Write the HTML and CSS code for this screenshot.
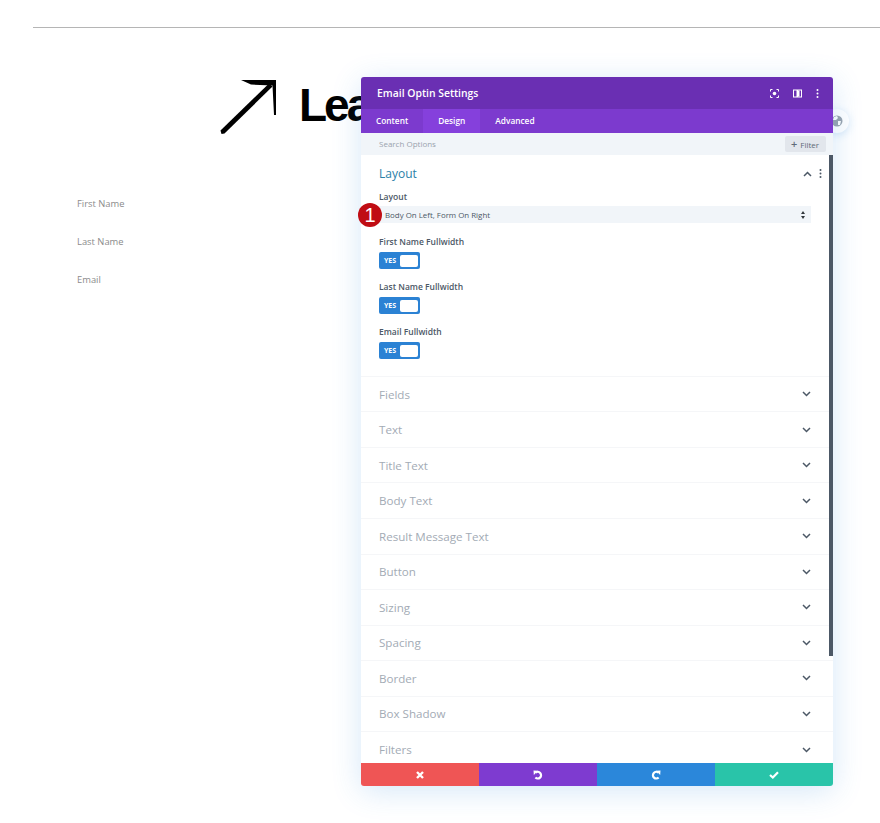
FILE: index.html
```html
<!DOCTYPE html>
<html lang="en">
<head>
<meta charset="utf-8">
<title>Email Optin Settings</title>
<link rel="stylesheet" href="styles.css">
</head>
<body>
<main class="page">
  <hr class="rule">
  <div class="title">
    <svg class="arrow" width="58" height="58" viewBox="0 0 58 58"><path d="M0.500 52.500 L49 5.500 L52.500 8.500 L4.500 55.500 L1.500 56 Z" fill="#000"/><path d="M21 2 H56 V37 H54 L52.500 7.500 L31 6.500 Z" fill="#000"/></svg>
    <span class="title-text">Lead</span>
  </div>
  <div class="fields">
    <div class="field">First Name</div>
    <div class="field">Last Name</div>
    <div class="field">Email</div>
  </div>
</main>

<div class="globe">
  <svg width="12" height="12" viewBox="0 0 12 12"><circle cx="6" cy="6" r="5.500" fill="#9aa3ad"/><path d="M3 2 L6 1 L7 3 L5 5 L2 5 Z M7 6 L10 6 L9 10 L7 10 Z" fill="#fff"/></svg>
</div>

<section class="panel">
  <header class="panel-head">
    <h1 class="panel-title">Email Optin Settings</h1>
    <div class="head-icons">
      <svg width="9" height="9" viewBox="0 0 9 9"><circle cx="4.500" cy="4.500" r="1.800" fill="#fff"/><path d="M.5 2.500V.5H2.500M6.500.5H8.500V2.500M8.500 6.500V8.500H6.500M2.500 8.500H.5V6.500" fill="none" stroke="#fff"/></svg>
      <svg width="9" height="9" viewBox="0 0 9 9"><path d="M0 .5H9V8.500H0Z M1 1.500V7.500H3.500V1.500Z M5 1.500V7.500H8V1.500Z" fill="#fff" fill-rule="evenodd"/><rect x="5" y="1.500" width="1.500" height="6" fill="#fff"/></svg>
      <svg width="3" height="9" viewBox="0 0 3 9"><circle cx="1.500" cy="1" r="1" fill="#fff"/><circle cx="1.500" cy="4.500" r="1" fill="#fff"/><circle cx="1.500" cy="8" r="1" fill="#fff"/></svg>
    </div>
  </header>
  <nav class="tabs">
    <span class="tab">Content</span>
    <span class="tab tab-active">Design</span>
    <span class="tab">Advanced</span>
  </nav>
  <div class="search">
    <span class="search-text">Search Options</span>
    <span class="filter"><b class="plus">+</b><span>Filter</span></span>
  </div>
  <div class="body">
    <div class="scrollbar"></div>
    <div class="open-group">
      <div class="open-head">
        <h2 class="open-title">Layout</h2>
        <div class="open-icons">
          <svg width="9" height="6" viewBox="0 0 9 6"><path d="M1 5 L4.500 1.500 L8 5" fill="none" stroke="#4c5866" stroke-width="1.500"/></svg>
          <svg width="3" height="9" viewBox="0 0 3 9"><circle cx="1.500" cy="1" r="1" fill="#4c5866"/><circle cx="1.500" cy="4.500" r="1" fill="#4c5866"/><circle cx="1.500" cy="8" r="1" fill="#4c5866"/></svg>
        </div>
      </div>
      <div class="label label-first">Layout</div>
      <div class="select">
        <span>Body On Left, Form On Right</span>
        <svg width="4" height="8" viewBox="0 0 4 8"><path d="M2 0 L4 3 H0Z M2 8 L4 5 H0Z" fill="#32373c"/></svg>
      </div>
      <div class="label label-after-select">First Name Fullwidth</div>
      <div class="toggle"><span class="yes">YES</span><span class="knob"></span></div>
      <div class="label">Last Name Fullwidth</div>
      <div class="toggle"><span class="yes">YES</span><span class="knob"></span></div>
      <div class="label">Email Fullwidth</div>
      <div class="toggle"><span class="yes">YES</span><span class="knob"></span></div>
    </div>
    <div class="row"><span>Fields</span><svg class="chev" width="9" height="6" viewBox="0 0 9 6"><path d="M1 1 L4.500 4.500 L8 1" /></svg></div>
    <div class="row"><span>Text</span><svg class="chev" width="9" height="6" viewBox="0 0 9 6"><path d="M1 1 L4.500 4.500 L8 1" /></svg></div>
    <div class="row"><span>Title Text</span><svg class="chev" width="9" height="6" viewBox="0 0 9 6"><path d="M1 1 L4.500 4.500 L8 1" /></svg></div>
    <div class="row"><span>Body Text</span><svg class="chev" width="9" height="6" viewBox="0 0 9 6"><path d="M1 1 L4.500 4.500 L8 1" /></svg></div>
    <div class="row"><span>Result Message Text</span><svg class="chev" width="9" height="6" viewBox="0 0 9 6"><path d="M1 1 L4.500 4.500 L8 1" /></svg></div>
    <div class="row"><span>Button</span><svg class="chev" width="9" height="6" viewBox="0 0 9 6"><path d="M1 1 L4.500 4.500 L8 1" /></svg></div>
    <div class="row"><span>Sizing</span><svg class="chev" width="9" height="6" viewBox="0 0 9 6"><path d="M1 1 L4.500 4.500 L8 1" /></svg></div>
    <div class="row"><span>Spacing</span><svg class="chev" width="9" height="6" viewBox="0 0 9 6"><path d="M1 1 L4.500 4.500 L8 1" /></svg></div>
    <div class="row"><span>Border</span><svg class="chev" width="9" height="6" viewBox="0 0 9 6"><path d="M1 1 L4.500 4.500 L8 1" /></svg></div>
    <div class="row"><span>Box Shadow</span><svg class="chev" width="9" height="6" viewBox="0 0 9 6"><path d="M1 1 L4.500 4.500 L8 1" /></svg></div>
    <div class="row"><span>Filters</span><svg class="chev" width="9" height="6" viewBox="0 0 9 6"><path d="M1 1 L4.500 4.500 L8 1" /></svg></div>
  </div>
  <footer class="actions">
    <span class="action a-red"><svg width="8" height="8" viewBox="0 0 8 8"><path d="M1 1 L7 7 M7 1 L1 7" stroke="#fff" stroke-width="2.400" fill="none"/></svg></span>
    <span class="action a-purple"><svg width="10" height="10" viewBox="0 0 10 10"><path d="M2.600 2.700 A3.300 3.300 0 1 1 2.400 7.500" fill="none" stroke="#fff" stroke-width="2.200"/><path d="M.5 .6 L5 .8 L.8 5 Z" fill="#fff"/></svg></span>
    <span class="action a-blue"><svg width="10" height="10" viewBox="0 0 10 10"><path d="M7.400 2.700 A3.300 3.300 0 1 0 7.600 7.500" fill="none" stroke="#fff" stroke-width="2.200"/><path d="M9.500 .6 L5 .8 L9.200 5 Z" fill="#fff"/></svg></span>
    <span class="action a-green"><svg width="10" height="8" viewBox="0 0 10 8"><path d="M1 4 L3.800 6.500 L9 1.200" fill="none" stroke="#fff" stroke-width="2.200"/></svg></span>
  </footer>
</section>

<div class="badge">1</div>
</body>
</html>
```

FILE: styles.css
```css
* { box-sizing: border-box; }
html, body { margin: 0; padding: 0; }
body {
  width: 880px;
  height: 823px;
  overflow: hidden;
  background: #fff;
  font-family: "Open Sans", sans-serif;
  position: relative;
}
.page { padding: 27px 0 0 33px; }
.rule { margin: 0; border: 0; height: 1px; background: #b5b5b5; }
.title {
  display: flex;
  align-items: flex-start;
  gap: 21px;
  margin: 50px 0 0 187px;
}
.arrow { flex: none; }
.title-text {
  font-family: "Liberation Sans", sans-serif;
  font-weight: 700;
  font-size: 46px;
  line-height: 54px;
  letter-spacing: -3px;
  color: #000;
}
.fields {
  margin: 61px 0 0 44px;
  display: flex;
  flex-direction: column;
  gap: 24px;
}
.field { font-size: 9.400px; line-height: 14px; color: #8b8b8b; }

.panel {
  position: absolute;
  left: 361px;
  top: 77px;
  width: 472px;
  height: 709px;
  display: flex;
  flex-direction: column;
  border-radius: 3px;
  overflow: hidden;
  background: #fff;
  box-shadow: 0 5px 30px rgba(43, 135, 218, .2);
}
.globe {
  position: absolute;
  left: 825px;
  top: 109px;
  width: 24px;
  height: 24px;
  border-radius: 50%;
  background: #fff;
  box-shadow: 0 2px 8px rgba(43, 135, 218, .2);
  display: flex;
  align-items: center;
  justify-content: flex-end;
  padding-right: 6px;
}
.panel-head {
  flex: none;
  height: 32px;
  background: #6a2fb3;
  display: flex;
  align-items: center;
  justify-content: space-between;
  padding: 0 14px 0 16px;
}
.panel-title { margin: 0; font-size: 10.400px; font-weight: 600; color: #fff; }
.head-icons { display: flex; align-items: center; gap: 14px; }
.tabs {
  flex: none;
  height: 24px;
  background: #7c3ace;
  display: flex;
}
.tab {
  display: flex;
  align-items: center;
  padding: 0 15px 2px;
  font-size: 8.300px;
  font-weight: 600;
  color: #fff;
}
.tab-active { background: #8540dc; }
.search {
  flex: none;
  height: 22px;
  background: #f1f5f9;
  display: flex;
  align-items: center;
  justify-content: space-between;
  padding: 0 7px 0 18px;
}
.search-text { font-size: 8px; color: #9aa3ad; margin-bottom: 2px; }
.filter {
  display: flex;
  align-items: center;
  gap: 3px;
  background: #e2e6ec;
  width: 41px;
  height: 16px;
  padding-left: 6px;
  font-size: 8px;
  color: #5f6b78;
  border-radius: 2px;
}
.plus { font-size: 11px; line-height: 10px; font-weight: 600; }
.body { flex: 1; min-height: 0; overflow: hidden; position: relative; }
.scrollbar {
  position: absolute;
  right: 0;
  top: 0;
  width: 4px;
  height: 501px;
  background: #4c5866;
}
.open-group { height: 220.800px; padding: 0 22px 0 18px; }
.open-head {
  height: 36px;
  display: flex;
  align-items: center;
  justify-content: space-between;
  padding-top: 1px;
}
.open-title { margin: 0; font-size: 12px; font-weight: 400; color: #2b7fa8; }
.open-icons { display: flex; align-items: center; gap: 7px; margin-right: -11px; }
.label {
  font-size: 8.500px;
  font-weight: 600;
  line-height: 12px;
  color: #4c5866;
  margin-top: 12px;
}
.label-first { margin-top: 0; }
.label-after-select { margin-top: 13px; }
.select {
  margin-top: 3px;
  height: 17px;
  background: #f1f5f9;
  display: flex;
  align-items: center;
  justify-content: space-between;
  padding: 0 6px;
  font-size: 7.900px;
  color: #4c5866;
}
.toggle {
  margin-top: 4px;
  width: 41px;
  height: 17px;
  border-radius: 2px;
  background: #2b82d4;
  display: flex;
  align-items: center;
  justify-content: space-between;
  padding: 0 2px 0 5px;
}
.yes { font-size: 7px; font-weight: 700; color: #fff; }
.knob { width: 18px; height: 12px; border-radius: 2px; background: #fff; }
.row {
  height: 35.560px;
  padding: 0 22px 0 18px;
  border-top: 1px solid #f5f6f8;
  display: flex;
  align-items: center;
  justify-content: space-between;
  font-size: 11.600px;
  color: #a3abb5;
}
.chev { fill: none; stroke: #4c5866; stroke-width: 1.500; }
.actions { flex: none; height: 23px; display: flex; }
.action { flex: 1; display: flex; align-items: center; justify-content: center; }
.a-red { background: #ef5555; }
.a-purple { background: #7e3bd0; }
.a-blue { background: #2b87da; }
.a-green { background: #29c4a9; }
.badge {
  position: absolute;
  left: 358px;
  top: 203px;
  width: 24px;
  height: 24px;
  border-radius: 50%;
  background: #c00d14;
  color: #fff;
  font-family: "Liberation Sans", sans-serif;
  font-size: 20px;
  line-height: 24px;
  text-align: center;
}
```
